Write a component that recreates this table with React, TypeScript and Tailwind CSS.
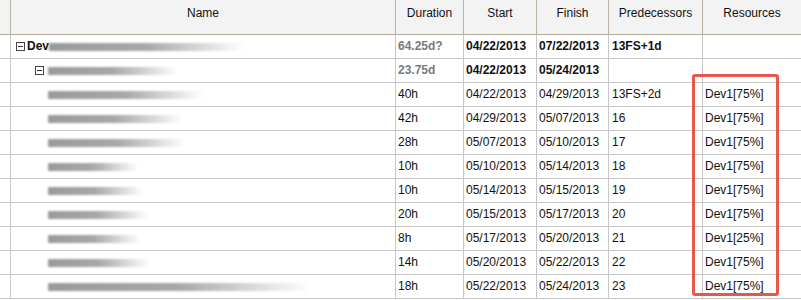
const cols = "grid grid-cols-[11px_385px_68px_73px_72px_94px_98px]";

type Row = {
  level: 0 | 1 | 2;
  bar: number;
  duration: string;
  start: string;
  finish: string;
  pred: string;
  res: string;
};

const rows: Row[] = [
  { level: 0, bar: 195, duration: "64.25d?", start: "04/22/2013", finish: "07/22/2013", pred: "13FS+1d", res: "" },
  { level: 1, bar: 130, duration: "23.75d", start: "04/22/2013", finish: "05/24/2013", pred: "", res: "" },
  { level: 2, bar: 155, duration: "40h", start: "04/22/2013", finish: "04/29/2013", pred: "13FS+2d", res: "Dev1[75%]" },
  { level: 2, bar: 135, duration: "42h", start: "04/29/2013", finish: "05/07/2013", pred: "16", res: "Dev1[75%]" },
  { level: 2, bar: 138, duration: "28h", start: "05/07/2013", finish: "05/10/2013", pred: "17", res: "Dev1[75%]" },
  { level: 2, bar: 90, duration: "10h", start: "05/10/2013", finish: "05/14/2013", pred: "18", res: "Dev1[75%]" },
  { level: 2, bar: 95, duration: "10h", start: "05/14/2013", finish: "05/15/2013", pred: "19", res: "Dev1[75%]" },
  { level: 2, bar: 100, duration: "20h", start: "05/15/2013", finish: "05/17/2013", pred: "20", res: "Dev1[75%]" },
  { level: 2, bar: 92, duration: "8h", start: "05/17/2013", finish: "05/20/2013", pred: "21", res: "Dev1[25%]" },
  { level: 2, bar: 102, duration: "14h", start: "05/20/2013", finish: "05/22/2013", pred: "22", res: "Dev1[75%]" },
  { level: 2, bar: 262, duration: "18h", start: "05/22/2013", finish: "05/24/2013", pred: "23", res: "Dev1[75%]" },
];

const Toggle = () => (
  <span className="flex h-[9px] w-[9px] items-center justify-center border border-[#444] bg-white">
    <span className="h-px w-[5px] bg-[#333]" />
  </span>
);

// blurred-out task names
const Blur = ({ width }: { width: number }) => (
  <div
    className="h-[8px] bg-linear-to-r from-[#9a9a9a] via-[#a8a8a8] to-transparent blur-[1px]"
    style={{ width }}
  />
);

const headers = ["Name", "Duration", "Start", "Finish", "Predecessors", "Resources"];

export default function App() {
  return (
    <div className="relative h-[300px] w-[801px] overflow-hidden bg-white font-['Liberation_Sans',Arial,sans-serif] text-[12px] text-[#111]">
      {/* header */}
      <div className={`${cols} h-[35px] border-b border-[#b3ab9a] bg-[#f3f3f3]`}>
        <div className="border-r border-[#b9b2a3]" />
        {headers.map((h, i) => (
          <div
            key={h}
            className={`pt-[5px] text-center leading-[16px] ${i < headers.length - 1 ? "border-r border-[#b9b2a3]" : ""}`}
          >
            {h}
          </div>
        ))}
      </div>

      {/* body */}
      {rows.map((r, i) => {
        const bold = r.level < 2;
        return (
          <div key={i} className={`${cols} h-[24px] border-b border-[#c8c8c8] leading-[23px]`}>
            <div className="border-r border-[#c8c8c8]" />
            <div className="flex items-center border-r border-[#c8c8c8]">
              {r.level === 0 && (
                <div className="flex items-center pl-[5px]">
                  <Toggle />
                  <span className="ml-[2px] font-bold">Dev</span>
                  <Blur width={r.bar} />
                </div>
              )}
              {r.level === 1 && (
                <div className="flex items-center pl-[24px]">
                  <Toggle />
                  <span className="w-[4px]" />
                  <Blur width={r.bar} />
                </div>
              )}
              {r.level === 2 && (
                <div className="pl-[37px]">
                  <Blur width={r.bar} />
                </div>
              )}
            </div>
            <div className={`border-r border-[#c8c8c8] pl-[2px] ${bold ? "font-bold text-[#7a7a7a]" : ""}`}>
              {r.duration}
            </div>
            <div className={`border-r border-[#c8c8c8] pl-[2px] ${bold ? "font-bold" : ""}`}>{r.start}</div>
            <div className={`border-r border-[#c8c8c8] pl-[2px] ${bold ? "font-bold" : ""}`}>{r.finish}</div>
            <div className={`border-r border-[#c8c8c8] pl-[3px] ${bold ? "font-bold" : ""}`}>{r.pred}</div>
            <div className="pl-[2px]">{r.res}</div>
          </div>
        );
      })}

      {/* highlight box */}
      <div className="absolute left-[692px] top-[74px] h-[222px] w-[87px] rounded-[3px] border-[3px] border-[#e5584b]" />
    </div>
  );
}
